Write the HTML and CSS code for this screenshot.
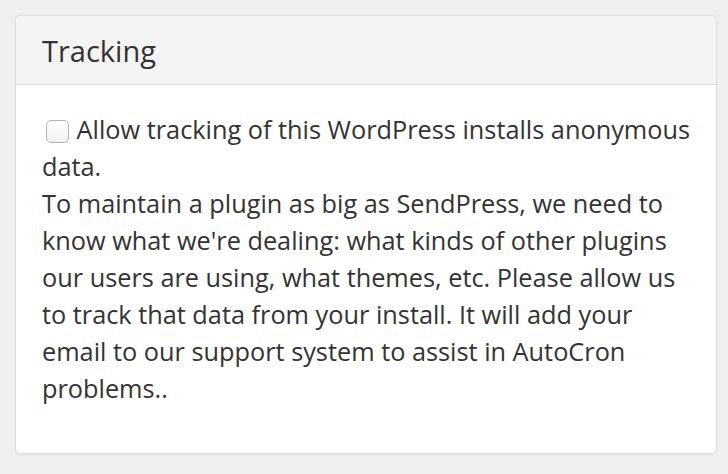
FILE: index.html
```html
<!DOCTYPE html>
<html>
<head>
<meta charset="utf-8">
<link rel="stylesheet" href="styles.css">
</head>
<body>
<div class="panel">
  <div class="panel-heading"><h3 class="panel-title">Tracking</h3></div>
  <div class="panel-body">
    <label class="check"><input type="checkbox" class="box"> Allow tracking of this WordPress installs anonymous data.</label>
    <p class="desc">To maintain a plugin as big as SendPress, we need to know what we're dealing: what kinds of other plugins our users are using, what themes, etc. Please allow us to track that data from your install. It will add your email to our support system to assist in AutoCron problems..</p>
  </div>
</div>
</body>
</html>
```
FILE: styles.css
```css
html, body { margin: 0; padding: 0; }
body {
  background: #efefef;
  font-family: "Open Sans", "Liberation Sans", sans-serif;
  color: #333;
  width: 728px;
  height: 474px;
  overflow: hidden;
}
.panel {
  margin: 15px 11px 0 15px;
  height: 439px;
  box-sizing: border-box;
  background: #fff;
  border: 1px solid #ddd;
  border-radius: 6px;
  box-shadow: 0 1px 2px rgba(0,0,0,0.06);
}
.panel-heading {
  background: #f4f4f4;
  border-bottom: 1px solid #ddd;
  border-radius: 6px 6px 0 0;
  height: 69px;
  box-sizing: border-box;
  padding: 0 26px;
  display: flex;
  align-items: center;
}
.panel-title {
  margin: 0;
  font-size: 29px;
  font-weight: 400;
  color: #333;
}
.panel-body {
  padding: 26px 14px 26px 26px;
  font-size: 25.3px;
  line-height: 37px;
}
.check { display: block; }
.box {
  appearance: none;
  -webkit-appearance: none;
  width: 23px;
  height: 23px;
  margin: 0 1px 0 4px;
  border: 1px solid #b4b4b4;
  border-radius: 5px;
  background: linear-gradient(#fff, #f2f2f2);
  vertical-align: -4px;
}
.desc { margin: 0; }
```
